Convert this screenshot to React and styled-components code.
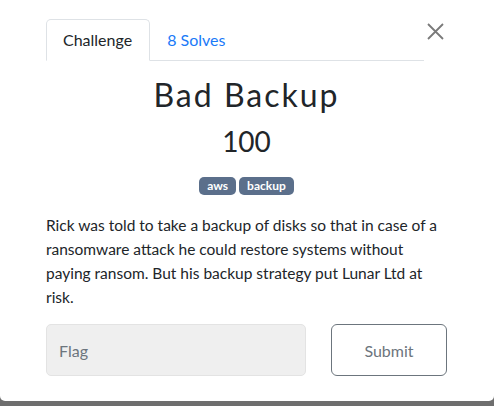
import React from "react";
import styled, { createGlobalStyle } from "styled-components";

const Global = createGlobalStyle`
    html, body {
        margin: 0;
        padding: 0;
        background: #6e6e6e;
        font-family: Lato, "Noto Sans", sans-serif;
        color: #212529;
    }
    * {
        box-sizing: border-box;
    }
`;

const Modal = styled.div`
    width: 494px;
    height: 401px;
    background: #fff;
    border-radius: 0 0 5px 5px;
    padding: 19px 47px 0 46px;
`;

const Header = styled.div`
    display: flex;
    align-items: flex-start;
`;

const Tabs = styled.ul`
    flex: 1;
    display: flex;
    list-style: none;
    margin: 0;
    padding: 0;
    border-bottom: 1px solid #dee2e6;
`;

const Tab = styled.li`
    margin-bottom: -1px;
    padding: 8px 17px 8px 16px;
    font-size: 16px;
    line-height: 24px;
    border: 1px solid ${(p) => (p.active ? "#dee2e6" : "transparent")};
    border-bottom-color: ${(p) => (p.active ? "#fff" : "transparent")};
    border-radius: 5px 5px 0 0;
    background: ${(p) => (p.active ? "#fff" : "transparent")};
    color: ${(p) => (p.active ? "#212529" : "#1a7af8")};
`;

const Close = styled.button`
    width: 23px;
    height: 23px;
    margin-top: 1px;
    padding: 0;
    border: 0;
    background: none;
    display: flex;
    align-items: center;
    justify-content: center;
`;

const Title = styled.h2`
    margin: 15px 0 10px;
    text-align: center;
    font-size: 32px;
    line-height: 38px;
    font-weight: 400;
    letter-spacing: 2px;
`;

const Value = styled.h3`
    margin: 0;
    text-align: center;
    font-size: 28px;
    line-height: 34px;
    font-weight: 400;
`;

const TagRow = styled.div`
    display: flex;
    justify-content: center;
    gap: 3px;
    margin: 19px 0 18px;
`;

const Tag = styled.span`
    display: inline-block;
    padding: 0 8px;
    height: 18px;
    line-height: 18px;
    font-size: 12px;
    font-weight: 700;
    color: #fff;
    background: #5b6f8b;
    border-radius: 5px;
`;

const Description = styled.p`
    margin: 0;
    font-size: 15.5px;
    line-height: 24px;
`;

const FlagRow = styled.form`
    display: flex;
    gap: 25px;
    margin-top: 15px;
`;

const FlagInput = styled.input`
    flex: 0 0 260px;
    height: 52px;
    padding: 0 12px;
    border: 1px solid #e3e3e3;
    border-radius: 5px;
    background: #efefef;
    font-family: inherit;
    font-size: 16px;
    color: #495057;
    &::placeholder {
        color: #6c757d;
    }
`;

const SubmitButton = styled.button`
    flex: 1;
    height: 52px;
    border: 1px solid #6c757d;
    border-radius: 6px;
    background: #fff;
    font-family: inherit;
    font-size: 16px;
    color: #6c757d;
`;

export default function App() {
    return (
        <>
            <Global />
            <Modal>
                <Header>
                    <Tabs>
                        <Tab active>Challenge</Tab>
                        <Tab>8 Solves</Tab>
                    </Tabs>
                    <Close aria-label="Close">
                        <svg width="17" height="17" viewBox="0 0 17 17">
                            <path
                                d="M1 1L16 16M16 1L1 16"
                                stroke="#7a7a7a"
                                strokeWidth="1.8"
                            />
                        </svg>
                    </Close>
                </Header>
                <Title>Bad Backup</Title>
                <Value>100</Value>
                <TagRow>
                    <Tag>aws</Tag>
                    <Tag>backup</Tag>
                </TagRow>
                <Description>
                    Rick was told to take a backup of disks so that in case of
                    a ransomware attack he could restore systems without
                    paying ransom. But his backup strategy put Lunar Ltd at
                    risk.
                </Description>
                <FlagRow onSubmit={(e) => e.preventDefault()}>
                    <FlagInput placeholder="Flag" />
                    <SubmitButton type="submit">Submit</SubmitButton>
                </FlagRow>
            </Modal>
        </>
    );
}
